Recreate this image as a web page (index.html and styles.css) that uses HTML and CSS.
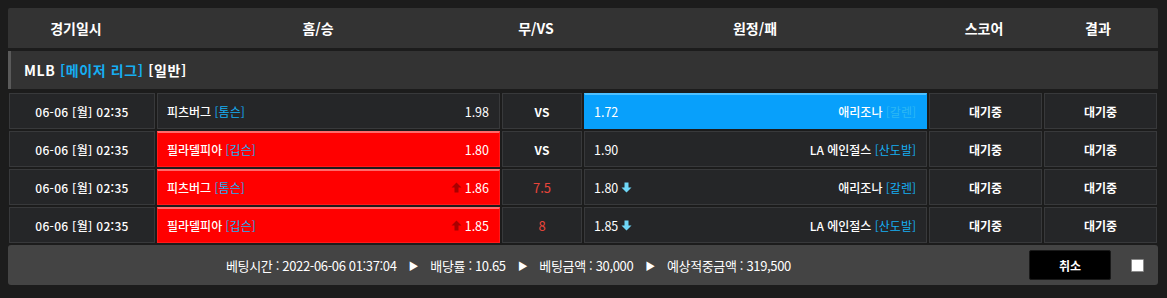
FILE: index.html
```html
<!DOCTYPE html>
<html lang="ko">
<head>
<meta charset="utf-8">
<link rel="stylesheet" href="styles.css">
</head>
<body>
<div class="board">
  <div class="head">
    <div>경기일시</div>
    <div>홈/승</div>
    <div>무/VS</div>
    <div>원정/패</div>
    <div>스코어</div>
    <div>결과</div>
  </div>
  <div class="league">MLB <span class="tag">[메이저 리그]</span> [일반]</div>
  <div class="rows">
    <div class="cell date">06-06 [월] 02:35</div>
    <div class="cell team home"><span class="name">피츠버그 <span class="tag">[톰슨]</span></span><span class="odds">1.98</span></div>
    <div class="cell mid">VS</div>
    <div class="cell team away sel-blue"><span class="odds">1.72</span><span class="name">애리조나 <span class="tag">[갈렌]</span></span></div>
    <div class="cell mid">대기중</div>
    <div class="cell mid">대기중</div>

    <div class="cell date">06-06 [월] 02:35</div>
    <div class="cell team home sel-red"><span class="name">필라델피아 <span class="tag">[깁슨]</span></span><span class="odds">1.80</span></div>
    <div class="cell mid">VS</div>
    <div class="cell team away"><span class="odds">1.90</span><span class="name">LA 에인절스 <span class="tag">[산도발]</span></span></div>
    <div class="cell mid">대기중</div>
    <div class="cell mid">대기중</div>

    <div class="cell date">06-06 [월] 02:35</div>
    <div class="cell team home sel-red"><span class="name">피츠버그 <span class="tag">[톰슨]</span></span><span class="odds"><svg class="up" width="11" height="11" viewBox="0 0 11 11"><path d="M5.5 0.5 L10.5 5.5 L7.5 5.5 L7.5 10.5 L3.5 10.5 L3.5 5.5 L0.5 5.5 Z"/></svg>1.86</span></div>
    <div class="cell mid handi">7.5</div>
    <div class="cell team away"><span class="odds">1.80<svg class="down" width="11" height="11" viewBox="0 0 11 11"><path d="M5.5 10.5 L10.5 5.5 L7.5 5.5 L7.5 0.5 L3.5 0.5 L3.5 5.5 L0.5 5.5 Z"/></svg></span><span class="name">애리조나 <span class="tag">[갈렌]</span></span></div>
    <div class="cell mid">대기중</div>
    <div class="cell mid">대기중</div>

    <div class="cell date">06-06 [월] 02:35</div>
    <div class="cell team home sel-red"><span class="name">필라델피아 <span class="tag">[깁슨]</span></span><span class="odds"><svg class="up" width="11" height="11" viewBox="0 0 11 11"><path d="M5.5 0.5 L10.5 5.5 L7.5 5.5 L7.5 10.5 L3.5 10.5 L3.5 5.5 L0.5 5.5 Z"/></svg>1.85</span></div>
    <div class="cell mid handi">8</div>
    <div class="cell team away"><span class="odds">1.85<svg class="down" width="11" height="11" viewBox="0 0 11 11"><path d="M5.5 10.5 L10.5 5.5 L7.5 5.5 L7.5 0.5 L3.5 0.5 L3.5 5.5 L0.5 5.5 Z"/></svg></span><span class="name">LA 에인절스 <span class="tag">[산도발]</span></span></div>
    <div class="cell mid">대기중</div>
    <div class="cell mid">대기중</div>
  </div>
  <div class="footer">
    <div class="summary">
      <span>베팅시간 : 2022-06-06 01:37:04</span><span class="tri">▶</span>
      <span>배당률 : 10.65</span><span class="tri">▶</span>
      <span>베팅금액 : 30,000</span><span class="tri">▶</span>
      <span>예상적중금액 : 319,500</span>
    </div>
    <button class="cancel">취소</button>
    <span class="check"></span>
  </div>
</div>
</body>
</html>
```
FILE: styles.css
```css
html, body {
  margin: 0;
  padding: 0;
  background: #1c1c1c;
}
body {
  padding: 8px 9px 8px 8px;
  font-family: "Noto Sans CJK KR", "Noto Sans", sans-serif;
  font-size: 12px;
  color: #ffffff;
}
.board {
  width: 1150px;
}
.head {
  display: grid;
  grid-template-columns: 136px 348px 88px 350px 108px 120px;
  height: 40px;
  background: #333333;
  border-radius: 2px 2px 0 0;
  font-size: 14px;
  font-weight: 700;
}
.head div {
  display: flex;
  align-items: center;
  justify-content: center;
}
.league {
  margin-top: 3px;
  height: 38px;
  background: #333333;
  border-left: 3px solid #5a5a5a;
  display: flex;
  align-items: center;
  padding-left: 13px;
  font-size: 14px;
  font-weight: 700;
  letter-spacing: 0.6px;
  white-space: pre;
}
.tag {
  color: #16aef2;
  font-weight: 400;
}
.league .tag {
  font-weight: 700;
}
.rows {
  margin-top: 4px;
  padding-left: 1px;
  display: grid;
  grid-template-columns: 146px 343px 80px 343px 113px 113px;
  grid-auto-rows: 36px;
  gap: 2px;
}
.cell {
  box-sizing: border-box;
  background: #252628;
  border: 1px solid #38393b;
  display: flex;
  align-items: center;
}
.date {
  justify-content: center;
  font-weight: 500;
  letter-spacing: 0.3px;
}
.mid {
  justify-content: center;
  font-weight: 700;
}
.handi {
  color: #e8453a;
  font-weight: 400;
  font-size: 13px;
}
.team {
  justify-content: space-between;
  padding: 0 10px 0 9px;
}
.team .name {
  font-weight: 500;
  white-space: pre;
}
.team .name .tag {
  font-weight: 400;
}
.odds {
  display: flex;
  align-items: center;
  gap: 3px;
  font-size: 12.5px;
}
.sel-red {
  background: #ff0000;
  border-color: #ff1a1a;
  border-top: 2px solid #ff6a6a;
}
.sel-blue {
  background: #08a0fb;
  border-color: #08a0fb;
  border-top: 2px solid #4ec0ff;
}
.sel-blue .tag {
  color: #2cb8f4;
}
.up {
  fill: #a80000;
}
.down {
  fill: #6fd7f7;
}
.footer {
  margin-top: 2px;
  height: 40px;
  background: #444444;
  border-radius: 3px;
  display: flex;
  align-items: center;
}
.summary {
  padding-left: 218px;
  display: flex;
  align-items: center;
  font-size: 13px;
  letter-spacing: -0.35px;
  white-space: pre;
}
.tri {
  font-size: 10px;
  margin: 0 12px;
}
.cancel {
  margin-left: auto;
  width: 82px;
  height: 30px;
  background: #000000;
  border: 1px solid #1a1a1a;
  border-radius: 2px;
  color: #ffffff;
  font-family: "Noto Sans CJK KR", sans-serif;
  font-size: 12px;
  font-weight: 700;
}
.check {
  box-sizing: border-box;
  width: 13px;
  height: 13px;
  margin: 0 14px 0 20px;
  background: #ffffff;
  border: 1px solid #8a8a8a;
  border-radius: 1px;
}
```
